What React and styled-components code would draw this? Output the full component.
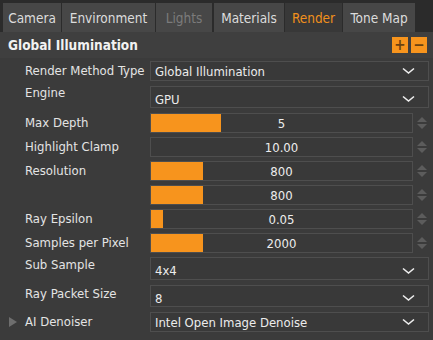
import styled, { createGlobalStyle } from "styled-components";

const GlobalStyle = createGlobalStyle`
  html, body {
    margin: 0;
    padding: 0;
    background: #3b3b3b;
  }
  body {
    font-family: "DejaVu Sans Condensed", "DejaVu Sans", Verdana, sans-serif;
    color: #e6e6e6;
  }
`;

const tabs = [
  { name: "Camera", w: 58 },
  { name: "Environment", w: 93 },
  { name: "Lights", w: 56, disabled: true },
  { name: "Materials", w: 70 },
  { name: "Render", w: 57, active: true },
  { name: "Tone Map", w: 72 },
];

const rows = [
  { label: "Render Method Type", type: "select", value: "Global Illumination", h: 20, mt: 3 },
  { label: "Engine", type: "select", value: "GPU", h: 22, mt: 5, top: 0 },
  { label: "Max Depth", type: "num", value: "5", fill: 70, mt: 5 },
  { label: "Highlight Clamp", type: "num", value: "10.00", fill: 0, mt: 4 },
  { label: "Resolution", type: "num", value: "800", fill: 52, mt: 4 },
  { label: "", type: "num", value: "800", fill: 52, mt: 4 },
  { label: "Ray Epsilon", type: "num", value: "0.05", fill: 12, mt: 4 },
  { label: "Samples per Pixel", type: "num", value: "2000", fill: 52, mt: 4 },
  { label: "Sub Sample", type: "select", value: "4x4", h: 23, mt: 4, top: 1 },
  { label: "Ray Packet Size", type: "select", value: "8", h: 22, mt: 5, top: 2 },
  { label: "AI Denoiser", type: "select", value: "Intel Open Image Denoise", h: 20, mt: 5, arrow: true },
];

const Chevron = () => (
  <svg width="13" height="8" viewBox="0 0 13 8">
    <path d="M1 1.5 L6.5 6 L12 1.5" fill="none" stroke="#eeeeee" strokeWidth="1.6" />
  </svg>
);

const Spinner = () => (
  <SpinWrap>
    <svg width="10" height="13" viewBox="0 0 10 13">
      <path d="M5 0 L10 5 L0 5 Z" fill="#5c5c5c" />
      <path d="M0 7 L10 7 L5 12 Z" fill="#5c5c5c" />
    </svg>
  </SpinWrap>
);

const App = () => {
  return (
    <>
      <GlobalStyle />
      <Panel>
        <TabBar>
          {tabs.map((t) => (
            <Tab key={t.name} $w={t.w} $active={t.active} $disabled={t.disabled}>
              {t.name}
            </Tab>
          ))}
        </TabBar>
        <Header>
          <HeaderTitle>Global Illumination</HeaderTitle>
          <HeaderButtons>
            <SquareBtn>+</SquareBtn>
            <SquareBtn>−</SquareBtn>
          </HeaderButtons>
        </Header>
        <Rows>
          {rows.map((r, i) => (
            <Row key={i} style={{ marginTop: r.mt }}>
              <Label $top={r.top}>
                {r.arrow && <Expander />}
                {r.label}
              </Label>
              {r.type === "select" ? (
                <Select style={{ height: r.h }} $top={r.top !== undefined}>
                  <span>{r.value}</span>
                  <Chevron />
                </Select>
              ) : (
                <NumRow>
                  <NumBox>
                    {r.fill > 0 && <Fill style={{ width: r.fill }} />}
                    <NumText>{r.value}</NumText>
                  </NumBox>
                  <Spinner />
                </NumRow>
              )}
            </Row>
          ))}
        </Rows>
      </Panel>
    </>
  );
};

const Panel = styled.div`
  width: 433px;
  height: 340px;
  background: #3b3b3b;
  overflow: hidden;
`;

const TabBar = styled.div`
  display: flex;
  gap: 1px;
  padding: 3px 0 0 3px;
  height: 29px;
  background: #2b2b2b;
`;

const Tab = styled.div`
  display: flex;
  align-items: center;
  justify-content: center;
  width: ${(p) => p.$w}px;
  font-size: 13.5px;
  background: ${(p) => (p.$active ? "#383838" : "#474747")};
  color: ${(p) => (p.$active ? "#f0901c" : p.$disabled ? "#7b7b7b" : "#dcdcdc")};
  margin-right: ${(p) => (p.$disabled ? "1px" : "0")};
`;

const Header = styled.div`
  display: flex;
  align-items: center;
  justify-content: space-between;
  height: 26px;
  padding: 0 6px 0 8px;
  background: #3f3f3f;
`;

const HeaderTitle = styled.div`
  font-weight: bold;
  font-size: 13.5px;
  color: #f2f2f2;
`;

const HeaderButtons = styled.div`
  display: flex;
  gap: 3px;
`;

const SquareBtn = styled.div`
  width: 16px;
  height: 16px;
  background: #f7941d;
  color: #6b4210;
  font-size: 15px;
  line-height: 16px;
  text-align: center;
  font-weight: bold;
`;

const Rows = styled.div`
  display: flex;
  flex-direction: column;
`;

const Row = styled.div`
  display: grid;
  grid-template-columns: 150px 1fr;
  padding-right: 4px;
`;

const Label = styled.div`
  position: relative;
  display: flex;
  align-items: center;
  align-self: ${(p) => (p.$top !== undefined ? "start" : "center")};
  padding-left: 25px;
  font-size: 13px;
  color: #e4e4e4;
  white-space: nowrap;
  line-height: 14px;
  margin-top: ${(p) => p.$top || 0}px;
`;

const Expander = styled.span`
  position: absolute;
  left: 9px;
  top: 2px;
  width: 0;
  height: 0;
  border-left: 8px solid #6e6e6e;
  border-top: 5px solid transparent;
  border-bottom: 5px solid transparent;
`;

const Select = styled.div`
  box-sizing: border-box;
  display: flex;
  align-items: center;
  justify-content: space-between;
  padding: ${(p) => (p.$top ? "4px" : "0")} 13px 0 4px;
  border: 1px solid #4e4e4e;
  background: #393939;
  font-size: 13px;
  color: #ececec;
`;

const NumRow = styled.div`
  display: flex;
  align-items: center;
  gap: 3px;
`;

const NumBox = styled.div`
  position: relative;
  box-sizing: border-box;
  width: 263px;
  height: 20px;
  border: 1px solid #4e4e4e;
  background: #393939;
  display: flex;
  align-items: center;
  justify-content: center;
`;

const Fill = styled.div`
  position: absolute;
  left: 0;
  top: 0;
  bottom: 0;
  background: #f7941d;
`;

const NumText = styled.span`
  position: relative;
  font-size: 13px;
  color: #ededed;
`;

const SpinWrap = styled.div`
  display: flex;
  align-items: center;
  padding-left: 1px;
`;

export default App;
